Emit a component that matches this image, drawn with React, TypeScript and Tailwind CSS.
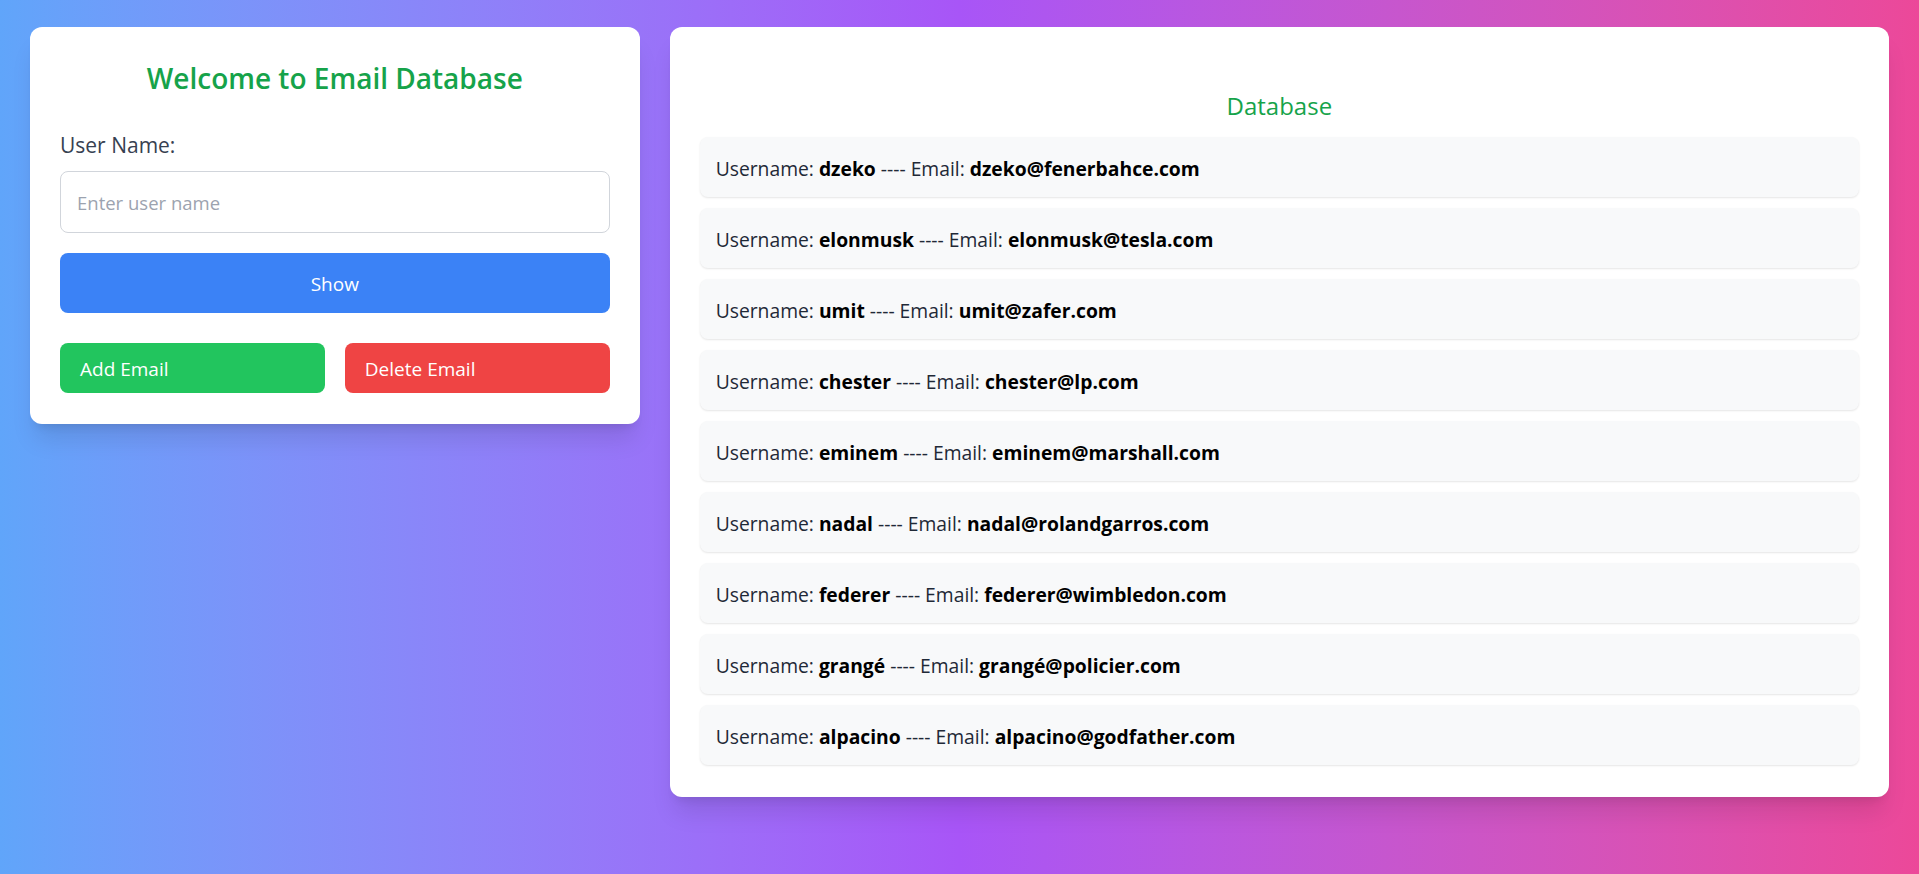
import { useState } from 'react'

const users = [
  { name: 'dzeko', email: 'dzeko@fenerbahce.com' },
  { name: 'elonmusk', email: 'elonmusk@tesla.com' },
  { name: 'umit', email: 'umit@zafer.com' },
  { name: 'chester', email: 'chester@lp.com' },
  { name: 'eminem', email: 'eminem@marshall.com' },
  { name: 'nadal', email: 'nadal@rolandgarros.com' },
  { name: 'federer', email: 'federer@wimbledon.com' },
  { name: 'grangé', email: 'grangé@policier.com' },
  { name: 'alpacino', email: 'alpacino@godfather.com' }
]

export default function App() {
  const [userName, setUserName] = useState('')

  return (
    <div className="min-h-screen bg-linear-to-r from-[#60a5fa] via-[#a855f7] to-[#ec4899] px-[30px] pt-[27px] pb-[30px] font-['Segoe_UI','Open_Sans',sans-serif]">
      <div className="grid grid-cols-[minmax(0,1fr)_minmax(0,2fr)] items-start gap-[30px]">
        <div className="rounded-xl bg-white p-[30px] pb-[31px] shadow-xl">
          <h1 className="mt-[3px] mb-[-1px] text-center text-[28px] leading-9 font-semibold text-[#16a34a]">
            Welcome to Email Database
          </h1>
          <label className="mt-[36px] block text-[21px] leading-7 text-[#374151]">User Name:</label>
          <input
            type="text"
            value={userName}
            onChange={(e) => setUserName(e.target.value)}
            placeholder="Enter user name"
            className="mt-[12px] w-full rounded-lg border border-[#d1d5db] px-4 pt-[17px] pb-[15px] text-[18.5px] leading-7 text-[#1f2937] placeholder:text-[#9ca3af] focus:outline-none"
          />
          <button className="mt-5 h-[60px] w-full rounded-lg bg-[#3b82f6] pt-[2px] text-[19px] text-white">
            Show
          </button>
          <div className="mt-[30px] flex gap-5">
            <button className="h-[50px] flex-1 rounded-lg bg-[#22c55e] px-5 pt-[2px] text-left text-[19px] text-white">
              Add Email
            </button>
            <button className="h-[50px] flex-1 rounded-lg bg-[#ef4444] px-5 pt-[2px] text-left text-[19px] text-white">
              Delete Email
            </button>
          </div>
        </div>

        <div className="rounded-xl bg-white p-[30px] pb-[32px] shadow-xl">
          <h2 className="mt-[33px] mb-[15px] text-center text-2xl leading-8 text-[#16a34a]">Database</h2>
          <div className="flex flex-col gap-[11px]">
            {users.map((u) => (
              <div
                key={u.name}
                className="h-[60px] rounded-lg bg-[#f8f9fa] px-4 pt-[18px] pb-[14px] text-[19.3px] leading-7 text-[#1f2937] shadow-[0_1px_2px_0_rgba(0,0,0,0.1)]"
              >
                Username: <b className="font-bold text-black">{u.name}</b> ---- Email:{' '}
                <b className="font-bold text-black">{u.email}</b>
              </div>
            ))}
          </div>
        </div>
      </div>
    </div>
  )
}
